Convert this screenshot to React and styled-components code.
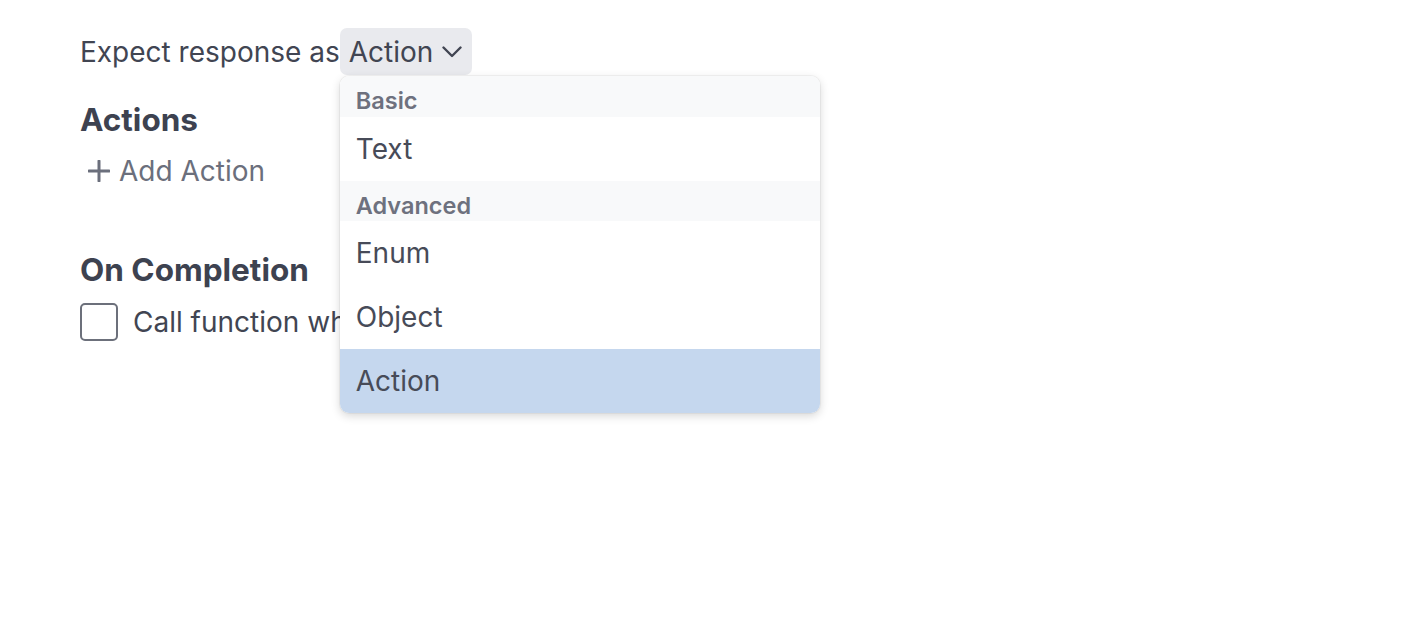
import React from 'react';
import styled, { createGlobalStyle } from 'styled-components';

const Global = createGlobalStyle`
  body {
    margin: 0;
    background: #ffffff;
    font-family: Inter, "Noto Sans", sans-serif;
    color: #414552;
  }
`

const Page = styled.div`
  min-height: 100vh;
  box-sizing: border-box;
  padding: 28px 80px;
`
const ResponseRow = styled.div`
  display: flex;
  align-items: center;
  font-size: 28px;
  height: 47px;
`
const SelectWrap = styled.div`
  position: relative;
`
const SelectButton = styled.button`
  display: flex;
  align-items: center;
  gap: 9px;
  height: 47px;
  padding: 0 10px 0 9px;
  border: none;
  border-radius: 7px;
  background: #e9eaee;
  font-family: inherit;
  font-size: 28px;
  color: #414552;
`
const Menu = styled.div`
  position: absolute;
  top: 48px;
  left: 0;
  width: 480px;
  background: #fff;
  border-radius: 9px;
  overflow: hidden;
  box-shadow: 0 3px 10px rgba(0, 0, 0, 0.16), 0 0 0 1px rgba(0, 0, 0, 0.04);
  z-index: 10;
`
const GroupLabel = styled.div`
  background: #f8f9fa;
  padding: 12px 16px ${p => p.$first ? '4px' : '3px'};
  line-height: 25px;
  font-size: 23.5px;
  font-weight: 600;
  color: #6e717e;
`
const Option = styled.div`
  display: flex;
  align-items: center;
  height: 64px;
  padding: 0 16px;
  font-size: 28px;
  color: #474b58;
  background: ${p => p.$active ? '#c5d7ee' : '#fff'};
`
const Heading = styled.h2`
  margin: ${p => p.$top}px 0 0;
  line-height: 36px;
  font-size: 31.5px;
  font-weight: 700;
  color: #3d4250;
`
const AddButton = styled.button`
  display: flex;
  align-items: center;
  gap: 9px;
  margin-top: 15px;
  padding: 0 0 0 8px;
  height: 36px;
  border: none;
  background: none;
  font-family: inherit;
  font-size: 28px;
  color: #6b6f7c;
`
const CheckRow = styled.label`
  display: flex;
  align-items: center;
  gap: 15px;
  margin-top: 15px;
  font-size: 28px;
  color: #414552;
`
const Box = styled.span`
  display: inline-block;
  width: 38px;
  height: 38px;
  box-sizing: border-box;
  border: 2px solid #6c707b;
  border-radius: 5px;
`

function Chevron() {
  return (
    <svg width="20" height="12" viewBox="0 0 20 12">
      <polyline points="1.5,1.5 10,10 18.5,1.5" fill="none" stroke="#414552" strokeWidth="2.4" strokeLinecap="round" strokeLinejoin="round" />
    </svg>
  )
}

function Plus() {
  return (
    <svg width="22" height="22" viewBox="0 0 22 22">
      <path d="M11 1v20M1 11h20" stroke="#6b6f7c" strokeWidth="3" strokeLinecap="round" />
    </svg>
  )
}

export default function App() {
  return (
    <Page>
      <Global />
      <ResponseRow>
        <span>Expect response as</span>
        <SelectWrap>
          <SelectButton>Action <Chevron /></SelectButton>
          <Menu>
            <GroupLabel $first>Basic</GroupLabel>
            <Option>Text</Option>
            <GroupLabel>Advanced</GroupLabel>
            <Option>Enum</Option>
            <Option>Object</Option>
            <Option $active>Action</Option>
          </Menu>
        </SelectWrap>
      </ResponseRow>
      <Heading $top={27}>Actions</Heading>
      <AddButton><Plus /> Add Action</AddButton>
      <Heading $top={63}>On Completion</Heading>
      <CheckRow>
        <Box />
        <span>Call function when complete</span>
      </CheckRow>
    </Page>
  )
}
